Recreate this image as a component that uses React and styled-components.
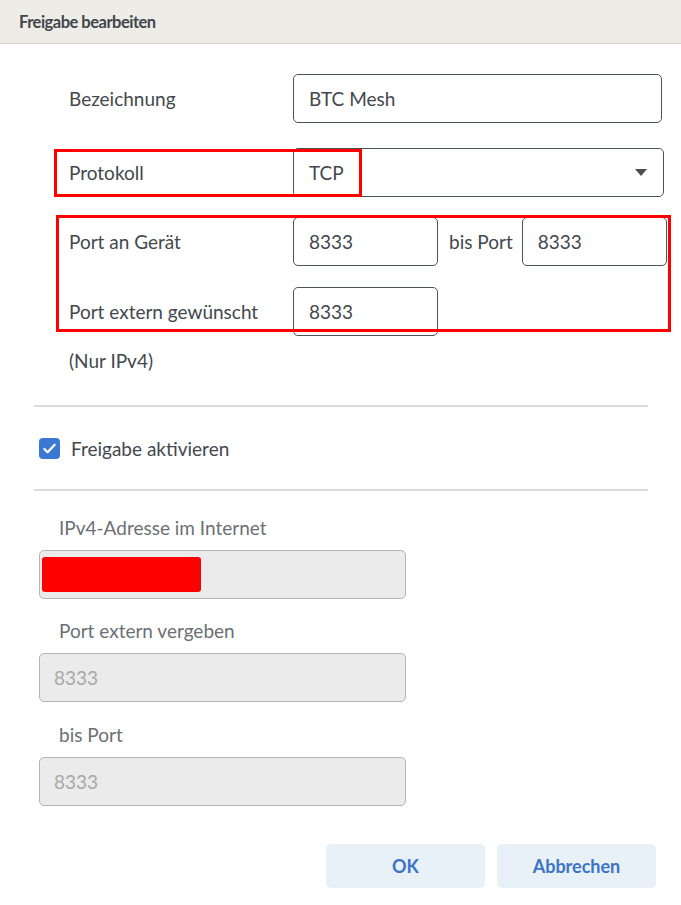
import React from "react";
import styled, { createGlobalStyle } from "styled-components";

const Global = createGlobalStyle`
  html, body {
    margin: 0;
    padding: 0;
    background: #fff;
  }
  body {
    font-family: Lato, "Noto Sans", "Liberation Sans", sans-serif;
    color: #43484d;
  }
`;

const Dialog = styled.div`
  width: 681px;
  height: 905px;
  background: #fff;
  position: relative;
  overflow: hidden;
`;

const Header = styled.div`
  height: 43px;
  background: #edece6;
  border-bottom: 1px solid #d5d5d2;
  display: flex;
  align-items: center;
  padding-left: 19px;
  font-size: 16.5px;
  font-weight: 700;
  letter-spacing: -0.5px;
  color: #41464b;
`;

const Body = styled.div`
  position: relative;
  padding-top: 30px;
`;

const Row = styled.div`
  display: grid;
  grid-template-columns: 224px auto;
  align-items: center;
  padding-left: 69px;
  margin-top: ${(p) => p.$gap || 0}px;
`;

const Label = styled.div`
  font-size: 19px;
  color: #43484d;
`;

const Field = styled.div`
  width: ${(p) => p.$w}px;
  height: 49px;
  box-sizing: border-box;
  border: 1px solid #4d5257;
  border-radius: 5px;
  display: flex;
  align-items: center;
  padding-left: 15px;
  font-size: 19px;
  color: #43484d;
  background: #fff;
`;

const SelectField = styled(Field)`
  justify-content: space-between;
  padding-right: 16px;
`;

const Arrow = styled.div`
  width: 0;
  height: 0;
  border-left: 6px solid transparent;
  border-right: 6px solid transparent;
  border-top: 7px solid #4a4f55;
`;

const Inline = styled.div`
  display: flex;
  align-items: center;
`;

const Between = styled.span`
  font-size: 19px;
  margin: 0 9px 0 11px;
`;

const Note = styled.div`
  padding-left: 69px;
  margin-top: 13px;
  font-size: 19px;
  line-height: 24px;
`;

const Divider = styled.hr`
  margin: ${(p) => p.$top}px 33px 0 34px;
  border: none;
  border-top: 2px solid #dcdcdc;
`;

const CheckRow = styled.label`
  display: flex;
  align-items: center;
  gap: 11px;
  padding-left: 39px;
  margin-top: 30px;
  font-size: 19px;
`;

const Box = styled.span`
  width: 21px;
  height: 21px;
  border-radius: 4px;
  background: #3b78d4;
  display: flex;
  align-items: center;
  justify-content: center;
`;

const Group = styled.div`
  padding-left: 39px;
  margin-top: ${(p) => p.$gap}px;
`;

const GrayLabel = styled.div`
  font-size: 19px;
  color: #6c7075;
  padding-left: 20px;
  line-height: 24px;
`;

const Disabled = styled.div`
  width: 367px;
  height: 49px;
  box-sizing: border-box;
  margin-top: 10px;
  background: #ebebeb;
  border: 1px solid #b5b5b5;
  border-radius: 5px;
  display: flex;
  align-items: center;
  padding-left: 14px;
  font-size: 19px;
  color: #a8a8a8;
`;

const Redacted = styled.div`
  width: 159px;
  height: 35px;
  background: #ff0000;
  border-radius: 3px;
  margin-left: -12px;
`;

const Footer = styled.div`
  display: flex;
  justify-content: flex-end;
  gap: 12px;
  padding-right: 25px;
  margin-top: 38px;
`;

const Button = styled.button`
  width: 159px;
  height: 44px;
  border: none;
  border-radius: 5px;
  background: #e8f0f8;
  color: #3b74c7;
  font-family: inherit;
  font-size: 18px;
  font-weight: 700;
`;

const Mark = styled.div`
  position: absolute;
  left: ${(p) => p.$x}px;
  top: ${(p) => p.$y}px;
  width: ${(p) => p.$w}px;
  height: ${(p) => p.$h}px;
  box-sizing: border-box;
  border: 3px solid #ff0000;
  pointer-events: none;
`;

export default function App() {
  return (
    <Dialog>
      <Global />
      <Header>Freigabe bearbeiten</Header>
      <Body>
        <Row>
          <Label>Bezeichnung</Label>
          <Field $w={369}>BTC Mesh</Field>
        </Row>
        <Row $gap={25}>
          <Label>Protokoll</Label>
          <SelectField $w={371}>
            TCP
            <Arrow />
          </SelectField>
        </Row>
        <Row $gap={20}>
          <Label>Port an Gerät</Label>
          <Inline>
            <Field $w={145}>8333</Field>
            <Between>bis Port</Between>
            <Field $w={145}>8333</Field>
          </Inline>
        </Row>
        <Row $gap={21}>
          <Label>Port extern gewünscht</Label>
          <Field $w={145}>8333</Field>
        </Row>
        <Note>(Nur IPv4)</Note>
        <Divider $top={32} />
        <CheckRow>
          <Box>
            <svg width="15" height="15" viewBox="0 0 16 16">
              <path d="M2.5 8.5l3.5 3.5 7.5-8" fill="none" stroke="#fff" strokeWidth="2.4" strokeLinecap="round" strokeLinejoin="round" />
            </svg>
          </Box>
          Freigabe aktivieren
        </CheckRow>
        <Divider $top={29} />
        <Group $gap={25}>
          <GrayLabel>IPv4-Adresse im Internet</GrayLabel>
          <Disabled>
            <Redacted />
          </Disabled>
        </Group>
        <Group $gap={20}>
          <GrayLabel>Port extern vergeben</GrayLabel>
          <Disabled>8333</Disabled>
        </Group>
        <Group $gap={21}>
          <GrayLabel>bis Port</GrayLabel>
          <Disabled>8333</Disabled>
        </Group>
        <Footer>
          <Button>OK</Button>
          <Button>Abbrechen</Button>
        </Footer>
        <Mark $x={54} $y={105} $w={308} $h={48} />
        <Mark $x={56} $y={171} $w={615} $h={117} />
      </Body>
    </Dialog>
  );
}
